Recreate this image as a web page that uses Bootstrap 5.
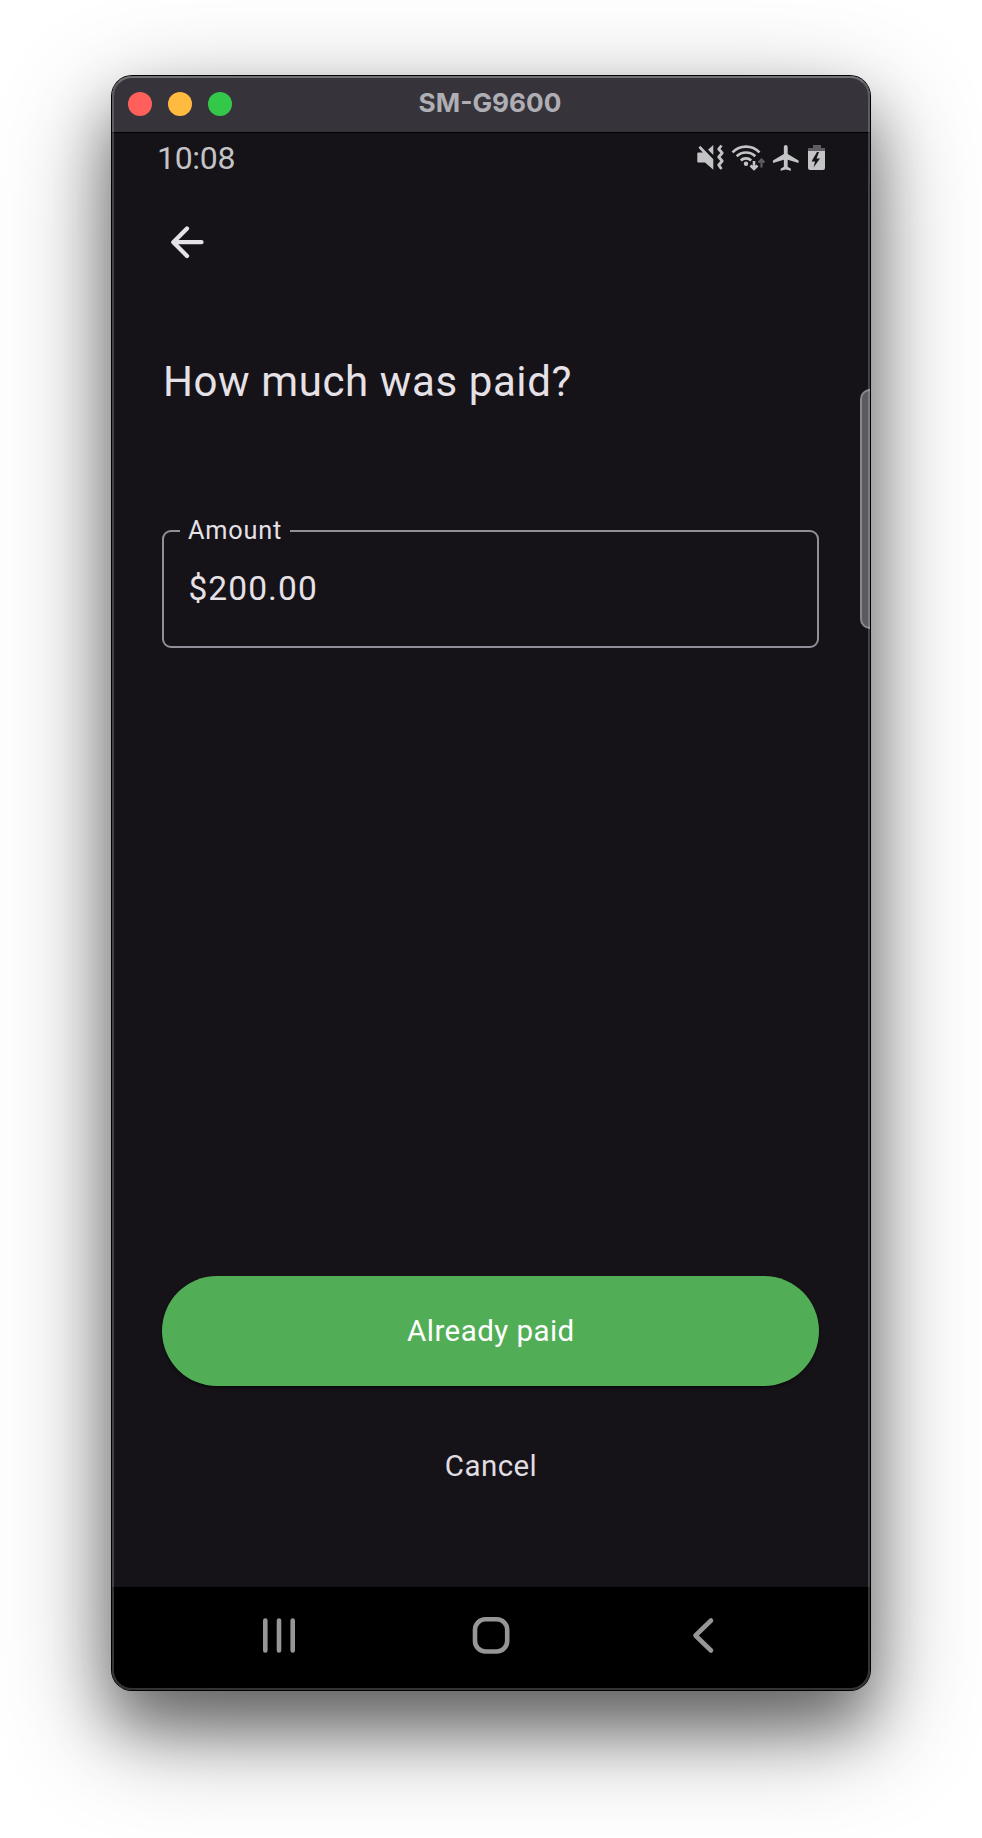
<!DOCTYPE html>
<html lang="en">
<head>
<meta charset="utf-8">
<meta name="viewport" content="width=device-width, initial-scale=1">
<title>SM-G9600</title>
<link href="https://cdn.jsdelivr.net/npm/bootstrap@5.3.0/dist/css/bootstrap.min.css" rel="stylesheet">
<style>
  body { background: #fff; font-family: Roboto, "Liberation Sans", sans-serif; overflow: hidden; }
  .stage { width: 982px; height: 1838px; padding: 76px 112px 148px; }
  .device { width: 758px; height: 1614px; border-radius: 20px; background: #151318; overflow: hidden; }
  .device-shadow { border-radius: 20px; box-shadow: 0 0 0 1px #000, 0 36px 60px rgba(0,0,0,.4), 0 36px 110px rgba(0,0,0,.42); position: relative; }
  /* thin light rim drawn over the window content */
  .rim { inset: 0; border-radius: 20px; border: 2px solid rgba(255,255,255,.2); border-top-color: rgba(255,255,255,.3); pointer-events: none; }
  .title-bar { height: 57px; background: #36343a; border-bottom: 1px solid #000; padding: 0 16px; }
  .light { width: 24px; height: 24px; }
  .title-text { font: 700 26.2px/1 Inter, sans-serif; color: #b0aeb5; padding: 0 2px 2px 0; }
  .status { height: 50px; padding: 0 44px 0 45px; color: #c4c3c6; }
  .clock { font-size: 32px; line-height: 50px; letter-spacing: -.3px; }
  .screen { padding: 0 51px; color: #e6e1e6; }
  .back { height: 118px; padding: 38px 0 0 3px; }
  .ask { font-size: 42px; line-height: 50px; font-weight: 400; letter-spacing: .6px; margin: 56px 0 0; }
  .field { margin: 123px 0 0 -.6px; height: 118px; border: 2px solid #938f99; border-radius: 9px; padding: 36.5px 24px 0; position: relative; width: 657px; }
  .field label { left: 15.600px; top: -16px; padding: 0 8px; background: #151318; font-size: 25.3px; line-height: 30px; letter-spacing: .8px; }
  .amount { font-size: 33.5px; line-height: 40px; letter-spacing: 1.1px; }
  .pay { height: 110px; width: 657px; margin-left: -.6px; background: #52ae56; color: #fff; font-size: 29.5px; letter-spacing: .45px; box-shadow: 0 2px 3px rgba(0,0,0,.5); border: 0; }
  .cancel { height: 84px; font-size: 29.5px; letter-spacing: .45px; color: #e0dce2; margin: 38px 0 79px; border: 0; }
  .handle { right: 0; top: 313px; width: 10.5px; height: 240px; background: #5b5a5e; border: 2px solid #89888b; border-right: 0; border-radius: 11px 0 0 11px; }
  .nav-keys { height: 103px; background: #000; }
</style>
</head>
<body>
<main class="stage">
  <div class="device-shadow">
    <div class="device d-flex flex-column">
      <header class="title-bar d-flex align-items-center position-relative flex-shrink-0">
        <div class="d-flex gap-3">
          <span class="light rounded-circle" style="background:#ff605c"></span>
          <span class="light rounded-circle" style="background:#ffbb40"></span>
          <span class="light rounded-circle" style="background:#34c84a"></span>
        </div>
        <div class="title-text position-absolute start-50 translate-middle-x">SM-G9600</div>
      </header>
      <div class="status d-flex justify-content-between flex-shrink-0">
        <div class="clock">10:08</div>
        <svg width="130" height="50" viewBox="696 133 130 50" fill="#c4c3c6">
          <path d="M698.300 152.500h4.500l-4.300-4.800 1.800-1.900 13 13.500v10.500l-8.300-7.300h-6.700q-1 0-1-1v-8q0-1 1-1zM708 149.800l5.300-4.800v10z"/>
          <path d="M721.500 145.500l-2.800 3.500 3.500 4-3.500 4 3.500 4-3.500 4 2.800 4" fill="none" stroke="#c4c3c6" stroke-width="2.800" stroke-linejoin="round"/>
          <g fill="none" stroke="#c4c3c6" stroke-width="2.600"><path d="M732.500 152.300a19 19 0 0 1 27 0M736.700 156.300a13.300 13.300 0 0 1 18.600 0M740.800 160.500a7.500 7.500 0 0 1 10.400 0"/><path d="M754 161v8M750.500 165.500l3.500 3.500 3.500-3.500"/></g>
          <circle cx="746" cy="163.700" r="2.200"/>
          <path d="M761.500 167.500v-8M758.500 162.500l3-3 3 3" fill="none" stroke="#5f5d62" stroke-width="2.200"/>
          <path transform="translate(770.400 142.500) scale(1.280)" d="M22 16v-2l-8.500-5V3.500c0-.830-.670-1.500-1.500-1.500s-1.500.670-1.500 1.500V9L2 14v2l8.500-2.500V19L8 20.500V22l4-1 4 1v-1.500L13.500 19v-5.500z"/>
          <path d="M813 145h8v3h4v3h-17v-3h5z" fill="#5f5d62"/>
          <path fill-rule="evenodd" d="M808 151h17v17q0 2-2 2h-13q-2 0-2-2zM817 152l-5.500 9.500h3.500l-1.500 6 6.500-9h-3.500l2.500-6.500z"/>
        </svg>
      </div>
      <section class="screen d-flex flex-column flex-grow-1">
        <div class="back">
          <svg width="40" height="40" viewBox="166 221 40 40" fill="none" stroke="#e6e1e6" stroke-width="4.300" stroke-linecap="round" stroke-linejoin="round"><path d="M201.500 242.200h-28M187 228.500l-13.700 13.700 13.700 13.700"/></svg>
        </div>
        <h1 class="ask">How much was paid?</h1>
        <div class="field">
          <label class="position-absolute">Amount</label>
          <div class="amount">$200.00</div>
        </div>
        <button class="btn pay rounded-pill mt-auto">Already paid</button>
        <button class="btn cancel">Cancel</button>
      </section>
      <footer class="nav-keys flex-shrink-0">
        <svg class="d-block" width="758" height="103" viewBox="112 1587 758 103" fill="none" stroke="#969696" stroke-width="4.600" stroke-linecap="round" stroke-linejoin="round">
          <path d="M265.300 1620.500v30M279 1620.500v30M292.700 1620.500v30"/>
          <rect x="475" y="1619.200" width="32.200" height="32.300" rx="10.500"/>
          <path d="M711 1620.500l-15.500 15 15.500 15"/>
        </svg>
      </footer>
    </div>
    <div class="handle position-absolute"></div>
    <div class="rim position-absolute"></div>
  </div>
</main>
<script src="https://cdn.jsdelivr.net/npm/bootstrap@5.3.0/dist/js/bootstrap.bundle.min.js"></script>
</body>
</html>
